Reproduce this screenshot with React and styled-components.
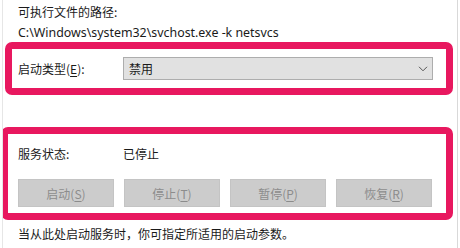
import React from "react";
import styled, { createGlobalStyle } from "styled-components";

const Global = createGlobalStyle`
  html, body { margin: 0; padding: 0; background: #ffffff; }
  body { font-family: "Noto Sans CJK SC", "Noto Sans", sans-serif; font-size: 12px; color: #1a1a1a; }
`;

const Page = styled.div`
  height: 248px;
  box-sizing: border-box;
  display: flex;
  flex-direction: column;
  overflow: hidden;
  border-left: 1px solid #e6e6e6;
  margin-left: 2px;
  width: 456px;
  border-right: 1px solid #d9d9d9;
`;

const Line = styled.div`
  height: ${(p) => p.$h}px;
  line-height: ${(p) => p.$h}px;
  padding-left: ${(p) => p.$x}px;
  white-space: nowrap;
  font-size: ${(p) => (p.$latin ? "12.4px" : "12px")};
  font-family: ${(p) => (p.$latin ? '"Noto Sans", "Noto Sans CJK SC", sans-serif' : '"Noto Sans CJK SC", sans-serif')};
`;

const Highlight = styled.section`
  box-sizing: border-box;
  margin-left: ${(p) => p.$x}px;
  width: ${(p) => p.$w}px;
  height: ${(p) => p.$h}px;
  border: 7px solid #e8185f;
  border-radius: 7px;
  display: flex;
  flex-direction: column;
  padding: ${(p) => p.$pad};
`;

const Spacer = styled.div`
  height: ${(p) => p.$h}px;
  flex: none;
`;

const Row = styled.div`
  display: flex;
  align-items: center;
  height: ${(p) => p.$h}px;
`;

const Label = styled.span`
  width: ${(p) => p.$w}px;
  flex: none;
  white-space: nowrap;
`;

const Combo = styled.div`
  box-sizing: border-box;
  width: 311px;
  height: 23px;
  background: #e1e1e1;
  border: 1px solid #adadad;
  display: flex;
  align-items: center;
  justify-content: space-between;
  padding: 0 4px 0 5px;
`;

const Buttons = styled.div`
  display: flex;
  gap: 10px;
  margin-top: ${(p) => p.$mt}px;
`;

const Button = styled.button`
  box-sizing: border-box;
  width: 96px;
  height: 28px;
  background: #cccccc;
  border: 1px solid #c4c4c4;
  color: #8c8c8c;
  font-family: "Noto Sans CJK SC", sans-serif;
  font-size: 12px;
  padding: 0;
`;

const U = styled.span`
  text-decoration: underline;
  text-underline-offset: 2px;
`;

const Chevron = () => (
  <svg width="10" height="6" viewBox="0 0 10 6">
    <path d="M1 0.8 L5 4.8 L9 0.8" fill="none" stroke="#555" strokeWidth="1" />
  </svg>
);

export default function App() {
  return (
    <>
      <Global />
      <Page>
        <Line $h={24} $x={15}>可执行文件的路径:</Line>
        <Line $h={18} $x={15} $latin>C:\Windows\system32\svchost.exe -k netsvcs</Line>
        <Highlight $x={2} $w={448} $h={53} $pad="8px 13px 0 6px">
          <Row $h={23}>
            <Label $w={105}>启动类型(<U>E</U>):</Label>
            <Combo>
              <span>禁用</span>
              <Chevron />
            </Combo>
          </Row>
        </Highlight>
        <Spacer $h={32} />
        <Highlight $x={-2} $w={452} $h={93} $pad="8px 13px 0 10px">
          <Row $h={22}>
            <Label $w={105}>服务状态:</Label>
            <span>已停止</span>
          </Row>
          <Buttons $mt={15}>
            <Button>启动(<U>S</U>)</Button>
            <Button>停止(<U>T</U>)</Button>
            <Button>暂停(<U>P</U>)</Button>
            <Button>恢复(<U>R</U>)</Button>
          </Buttons>
        </Highlight>
        <Line $h={28} $x={15}>当从此处启动服务时，你可指定所适用的启动参数。</Line>
      </Page>
    </>
  );
}
